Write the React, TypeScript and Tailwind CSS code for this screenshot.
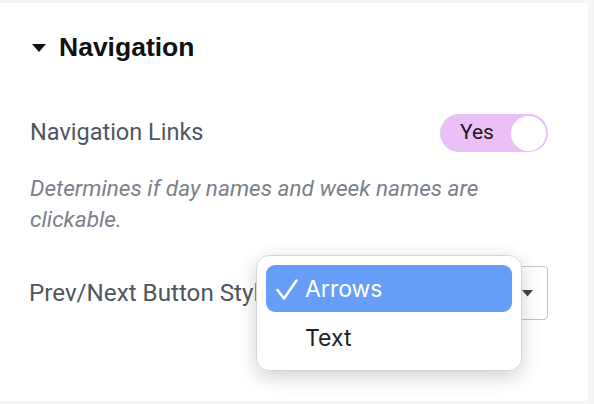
import React from 'react';

export default function App() {
    return (
        <div className="w-[594px] h-[404px] bg-[#f5f5f5] overflow-hidden relative" style={{ fontFamily: 'Roboto, "Liberation Sans", sans-serif' }}>
            <div className="w-[588px] h-[398px] bg-white mt-[3px] flex flex-col">
                {/* Section header */}
                <div className="flex items-center h-[90px] pl-[32px]">
                    <svg width="14" height="9" viewBox="0 0 14 9" className="mr-[13px]">
                        <polygon points="0,0 14,0 7,8" fill="#111" />
                    </svg>
                    <span className="text-[26.5px] font-bold text-[#111]" style={{ fontFamily: '"Liberation Sans", Arial, sans-serif' }}>Navigation</span>
                </div>

                {/* Navigation links toggle */}
                <div className="flex items-center justify-between pl-[30px] pr-[40px] mt-[21px]">
                    <span className="text-[23.5px] text-[#50565e]">Navigation Links</span>
                    <div className="w-[108px] h-[38px] rounded-full bg-[#ebc0f7] flex items-center justify-between pl-[20px] pr-[2px]">
                        <span className="text-[21px] text-[#1a1a1a]">Yes</span>
                        <div className="w-[35px] h-[35px] rounded-full bg-white" />
                    </div>
                </div>

                <p className="pl-[30px] w-[520px] mt-[21px] text-[22.6px] leading-[31px] italic text-[#7b808a]">
                    Determines if day names and week names are clickable.
                </p>

                {/* Prev/Next select */}
                <div className="flex items-center justify-between pl-[29px] pr-[40px] mt-[31px] relative">
                    <span className="text-[24.2px] text-[#50565e] whitespace-nowrap">Prev/Next Button Style</span>
                    <div className="w-[250px] h-[54px] border border-[#c3c5c8] rounded-[4px] flex items-center justify-end pr-[14px] shrink-0">
                        <svg width="11" height="7" viewBox="0 0 11 7">
                            <polygon points="0,0 11,0 5.5,6.5" fill="#444" />
                        </svg>
                    </div>

                    {/* Open dropdown menu */}
                    <div className="absolute left-[256px] top-[-11px] w-[266px] h-[116px] bg-white/95 rounded-[13px] border border-[#d6d6d6] shadow-[0_6px_20px_rgba(0,0,0,0.18)] p-[9px]" style={{ fontFamily: 'Inter, "Noto Sans", sans-serif' }}>
                        <div className="h-[47px] rounded-[9px] bg-[#669ef7] flex items-center pl-[10px] pt-[2px] text-white">
                            <svg width="22" height="21" viewBox="0 0 22 21" className="mr-[7px]">
                                <polyline points="1.5,11 8,19.5 20.5,1.5" fill="none" stroke="white" strokeWidth="2.6" strokeLinecap="round" strokeLinejoin="round" />
                            </svg>
                            <span className="text-[23px]">Arrows</span>
                        </div>
                        <div className="h-[48px] flex items-center pl-[39px] pt-[4px] text-[23px] text-[#222]">Text</div>
                    </div>
                </div>
            </div>
        </div>
    );
}
